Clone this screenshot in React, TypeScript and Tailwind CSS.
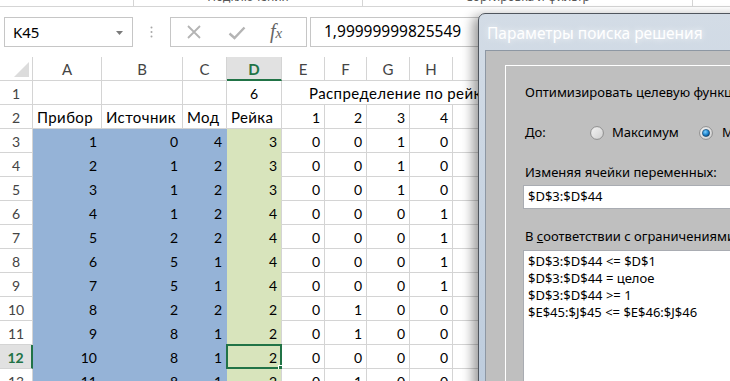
import React from "react";

const colW = ["w-[69px]", "w-[81px]", "w-[44px]", "w-[55px]", "w-[43px]", "w-[42px]", "w-[43px]", "w-[43px]", "w-[60px]"];
const letters = ["A", "B", "C", "D", "E", "F", "G", "H", "I"];

const data: number[][] = [
  [1, 0, 4, 3, 0, 0, 1, 0],
  [2, 1, 2, 3, 0, 0, 1, 0],
  [3, 1, 2, 3, 0, 0, 1, 0],
  [4, 1, 2, 4, 0, 0, 0, 1],
  [5, 2, 2, 4, 0, 0, 0, 1],
  [6, 5, 1, 4, 0, 0, 0, 1],
  [7, 5, 1, 4, 0, 0, 0, 1],
  [8, 2, 2, 2, 0, 1, 0, 0],
  [9, 8, 1, 2, 0, 1, 0, 0],
  [10, 8, 1, 2, 0, 0, 0, 0],
  [11, 8, 1, 2, 0, 1, 0, 0],
];

const cellFont = "font-['Lato','Open_Sans',sans-serif] text-[14px]";
const textCell = "text-[15px] tracking-[0.4px]";

function RowHeader({ n, active }: { n: number; active?: boolean }) {
  return (
    <div
      className={
        "w-[33px] shrink-0 flex items-center justify-center pt-[2px] border-b " +
        (active
          ? "bg-[#e1e1e1] border-r-2 border-r-[#217346] border-b-[#d4d4d4] text-[#217346] font-bold"
          : "border-r border-[#d4d4d4] text-[#444]")
      }
    >
      {n}
    </div>
  );
}

function ColHeaders() {
  return (
    <div className={"flex h-[24px] " + cellFont}>
      <div className="w-[33px] shrink-0 border-r border-b border-[#d4d4d4] relative">
        <svg className="absolute left-[14px] top-[5px]" width="16" height="16" viewBox="0 0 16 16">
          <polygon points="15,0 15,15 0,15" fill="#dcdcdc" />
        </svg>
      </div>
      {letters.map((l, i) => (
        <div
          key={l}
          className={
            colW[i] +
            " shrink-0 flex items-center justify-center pt-[2px] text-[15px] " +
            (l === "D"
              ? "bg-[#e1e1e1] border-b-2 border-b-[#217346] border-r border-r-[#d4d4d4] text-[#217346] font-bold"
              : "border-r border-b border-[#d4d4d4] text-[#444]")
          }
        >
          {l}
        </div>
      ))}
    </div>
  );
}

function DataRow({ r, vals }: { r: number; vals: number[] }) {
  const active = r === 12;
  return (
    <div className={"flex h-[24px] " + cellFont}>
      <RowHeader n={r} active={active} />
      {vals.map((v, i) => {
        let cls = "border-r border-b border-[#d4d4d4] bg-white";
        if (i < 3) cls = "border-r border-b border-[#95b3d7] bg-[#95b3d7]";
        else if (i === 3) cls = "border-r border-r-[#d4d4d4] border-b border-b-[#d8e4bc] bg-[#d8e4bc]";
        return (
          <div
            key={i}
            className={colW[i] + " shrink-0 relative flex items-center justify-end pr-[4px] pt-[2px] text-black " + cls}
          >
            {v}
            {active && i === 3 && (
              <div className="absolute -left-[1px] -top-[1px] w-[56px] h-[25px] border-2 border-[#217346]">
                <div className="absolute -right-[4px] -bottom-[4px] w-[6px] h-[6px] bg-[#217346] border border-white" />
              </div>
            )}
          </div>
        );
      })}
      <div className={colW[8] + " shrink-0 border-r border-b border-[#d4d4d4]"} />
    </div>
  );
}

function Radio({ checked }: { checked?: boolean }) {
  return (
    <svg width="14" height="14" viewBox="0 0 14 14" className="shrink-0">
      <defs>
        <linearGradient id={checked ? "rg1" : "rg0"} x1="0" y1="0" x2="1" y2="1">
          <stop offset="0" stopColor="#f4f4f4" />
          <stop offset="1" stopColor="#cfcfcf" />
        </linearGradient>
        <radialGradient id="blu" cx="0.4" cy="0.35" r="0.7">
          <stop offset="0" stopColor="#7fd0ff" />
          <stop offset="0.6" stopColor="#1b82cc" />
          <stop offset="1" stopColor="#0b3f6e" />
        </radialGradient>
      </defs>
      <circle cx="7" cy="7" r="6.4" fill={checked ? "url(#rg1)" : "url(#rg0)"} stroke="#8d8d8d" strokeWidth="1" />
      {checked && <circle cx="7" cy="7" r="3.6" fill="url(#blu)" stroke="#123f66" strokeWidth="0.6" />}
    </svg>
  );
}

export default function App() {
  return (
    <div className="relative w-[730px] h-[381px] overflow-hidden bg-white">
      {/* ribbon remnant */}
      <div className="flex h-[7px] border-b border-[#d5d5d5] font-['Noto_Sans',sans-serif] text-[12px] text-[#555]">
        <div className="w-[134px] shrink-0 border-r border-[#d5d5d5]" />
        <div className="w-[229px] shrink-0 border-r border-[#d5d5d5] flex justify-center items-end overflow-hidden">
          <span className="leading-[12px] whitespace-nowrap mb-[3px]">Подключения</span>
        </div>
        <div className="w-[330px] shrink-0 border-r border-[#d5d5d5] flex justify-center items-end overflow-hidden">
          <span className="leading-[12px] whitespace-nowrap mb-[3px]">Сортировка и фильтр</span>
        </div>
      </div>

      {/* formula bar */}
      <div className="flex h-[30px] mt-[10px] font-['Noto_Sans',sans-serif]">
        <div className="ml-[4px] w-[129px] shrink-0 border border-[#c6c6c6] flex items-center pl-[8px] relative text-[15px] text-black">
          K45
          <svg className="absolute left-[111px] top-[13px]" width="7" height="4" viewBox="0 0 7 4">
            <polygon points="0,0 7,0 3.5,4" fill="#7a7a7a" />
          </svg>
        </div>
        <div className="w-[37px] shrink-0 flex items-center justify-center">
          <svg width="3" height="12" viewBox="0 0 3 12">
            <circle cx="1.5" cy="1.5" r="1" fill="#a6a6a6" />
            <circle cx="1.5" cy="6" r="1" fill="#a6a6a6" />
            <circle cx="1.5" cy="10.5" r="1" fill="#a6a6a6" />
          </svg>
        </div>
        <div className="w-[137px] shrink-0 border border-[#c6c6c6] flex items-center">
          <svg className="ml-[15px]" width="16" height="16" viewBox="0 0 16 16">
            <path d="M2 2 L14 14 M14 2 L2 14" stroke="#b4b4b4" strokeWidth="1.8" />
          </svg>
          <svg className="ml-[26px] mt-[2px]" width="18" height="14" viewBox="0 0 18 14">
            <path d="M1.5 7.5 L6.5 12 L16.5 1.5" stroke="#b4b4b4" strokeWidth="2.4" fill="none" />
          </svg>
          <span className="ml-[24px] font-['Liberation_Serif',serif] italic text-[#666] text-[20px] leading-none pb-[2px]">
            f<span className="text-[15px]">x</span>
          </span>
        </div>
        <div className="ml-[3px] flex-1 border border-[#c6c6c6] flex items-center pl-[13px] text-[15.5px] text-black">
          1,99999999825549
        </div>
      </div>

      {/* sheet */}
      <div className="mt-[10px]">
        <ColHeaders />
        {/* row 1 */}
        <div className={"flex h-[24px] " + cellFont}>
          <RowHeader n={1} />
          <div className={colW[0] + " shrink-0 border-r border-b border-[#d4d4d4]"} />
          <div className={colW[1] + " shrink-0 border-r border-b border-[#d4d4d4]"} />
          <div className={colW[2] + " shrink-0 border-r border-b border-[#d4d4d4]"} />
          <div className={colW[3] + " shrink-0 border-r border-b border-[#d4d4d4] flex items-center justify-center pt-[2px]"}>6</div>
          <div className={"w-[231px] shrink-0 border-b border-[#d4d4d4] flex items-center pl-[27px] pt-[2px] whitespace-nowrap " + textCell}>
            Распределение по рейкам
          </div>
        </div>
        {/* row 2 */}
        <div className={"flex h-[24px] " + cellFont}>
          <RowHeader n={2} />
          {["Прибор", "Источник", "Мод", "Рейка"].map((t, i) => (
            <div key={t} className={colW[i] + " shrink-0 border-r border-b border-[#d4d4d4] flex items-center pl-[4px] pt-[2px] whitespace-nowrap overflow-hidden " + textCell}>
              {t}
            </div>
          ))}
          {[1, 2, 3, 4].map((n, j) => (
            <div key={n} className={colW[4 + j] + " shrink-0 border-r border-b border-[#d4d4d4] flex items-center justify-end pr-[4px] pt-[2px]"}>
              {n}
            </div>
          ))}
          <div className={colW[8] + " shrink-0 border-r border-b border-[#d4d4d4]"} />
        </div>
        {data.map((vals, k) => (
          <DataRow key={k} r={k + 3} vals={vals} />
        ))}
      </div>

      {/* dialog */}
      <div className="absolute left-[478px] top-[13px] w-[290px] h-[400px] rounded-tl-[7px] border border-[#50565e] bg-gradient-to-b from-[#d3dce6] to-[#bccbdc] shadow-[-5px_3px_12px_rgba(0,0,0,0.4)] font-['Noto_Sans',sans-serif]">
        <div className="h-[36px] flex items-center pl-[8px] pt-[3px] text-[15.5px] text-white [text-shadow:0_0_6px_rgba(255,255,255,0.9)]">
          Параметры поиска решения
        </div>
        <div className="ml-[6px] h-full bg-[#bfbfbf] border-l border-t border-[#8d97a3] pl-[19px] pt-[14px]">
          <div className="h-full border-l border-t border-white pl-[17px] text-[13px] text-black">
            <div className="h-[20px] mt-[17px] flex items-center pl-[2px] whitespace-nowrap">Оптимизировать целевую функцию:</div>
            <div className="h-[20px] mt-[20px] flex items-center pl-[2px] whitespace-nowrap">
              <span className="w-[65px] shrink-0">До:</span>
              <Radio />
              <span className="ml-[8px] w-[87px] shrink-0">Максимум</span>
              <Radio checked />
              <span className="ml-[9px]">Минимум</span>
            </div>
            <div className="h-[20px] mt-[20px] flex items-center pl-[2px] whitespace-nowrap">Изменяя ячейки переменных:</div>
            <div className="h-[24px] mt-[2px] bg-white border border-[#a9acb2] flex items-center pl-[4px] text-[13px]">$D$3:$D$44</div>
            <div className="h-[20px] mt-[18px] flex items-center pl-[2px] whitespace-nowrap">
              В&nbsp;<span className="underline">с</span>оответствии с ограничениями:
            </div>
            <div className="h-[200px] mt-[3px] bg-white border border-[#a9acb2] pl-[4px] pt-[2px] text-[13px] leading-[17px]">
              <div>$D$3:$D$44 &lt;= $D$1</div>
              <div>$D$3:$D$44 = целое</div>
              <div>$D$3:$D$44 &gt;= 1</div>
              <div>$E$45:$J$45 &lt;= $E$46:$J$46</div>
            </div>
          </div>
        </div>
      </div>
    </div>
  );
}
